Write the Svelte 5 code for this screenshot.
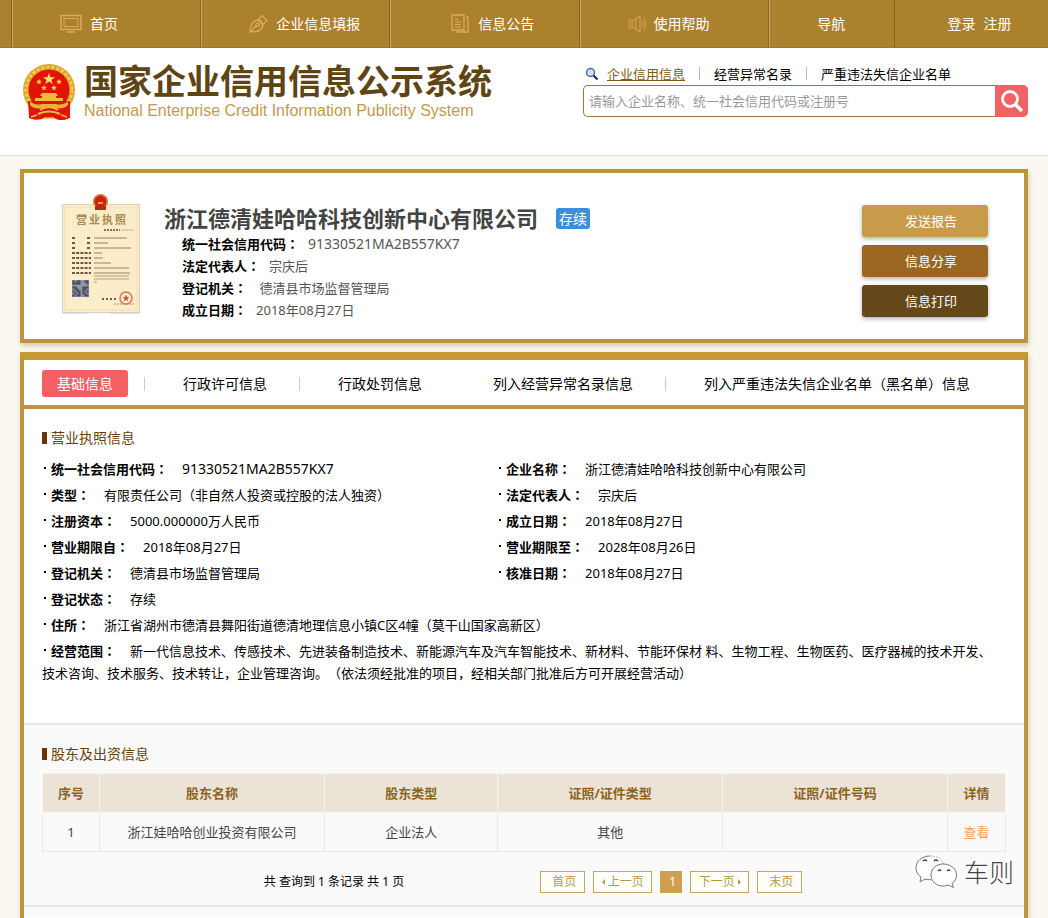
<script>
  const infoRows = [
    ['统一社会信用代码', '91330521MA2B557KX7', '企业名称', '浙江德清娃哈哈科技创新中心有限公司'],
    ['类型', '有限责任公司（非自然人投资或控股的法人独资）', '法定代表人', '宗庆后'],
    ['注册资本', '5000.000000万人民币', '成立日期', '2018年08月27日'],
    ['营业期限自', '2018年08月27日', '营业期限至', '2028年08月26日'],
    ['登记机关', '德清县市场监督管理局', '核准日期', '2018年08月27日']
  ];
  const summary = [
    ['统一社会信用代码', '91330521MA2B557KX7'],
    ['法定代表人', '宗庆后'],
    ['登记机关', '\u00a0德清县市场监督管理局'],
    ['成立日期', '2018年08月27日']
  ];
  const isCode = (value) => /^[0-9A-Z]+$/.test(value);
  const licenseLines = [0, 1, 2, 3, 4, 5, 6, 7];
  const qr = [];
  for (let y = 0; y < 8; y++) {
    for (let x = 0; x < 8; x++) {
      if ((x * 5 + y * 3 + x * y) % 7 < 4) qr.push([x, y]);
    }
  }
  let keyword = $state('');
</script>

{#snippet emblem()}
  <svg class="emblem" viewBox="0 0 54 57" aria-hidden="true">
    <path d="M7 36h40l-1 19c-6 2-11 1-14-1h-10c-4 2-9 2-14 0z" fill="#d3190b" />
    <circle cx="27" cy="26" r="26" fill="#dfa52b" />
    <circle cx="27" cy="26" r="23" fill="none" stroke="#f0cc5a" stroke-width="3" stroke-dasharray="3 2" />
    <circle cx="27" cy="26" r="20.5" fill="#e01507" />
    <path d="M27 9l1.500 4.200h4.500l-3.600 2.700 1.300 4.300-3.700-2.600-3.700 2.600 1.300-4.300-3.600-2.700h4.500z" fill="#ffe066" />
    <g fill="#ffd34f">
      <path d="M17 15l.8 1.800 2 .2-1.500 1.300.5 2-1.800-1-1.800 1 .5-2-1.500-1.300 2-.2z" />
      <path d="M37 15l.8 1.800 2 .2-1.500 1.300.5 2-1.800-1-1.800 1 .5-2-1.500-1.300 2-.2z" />
      <path d="M22 21l.8 1.800 2 .2-1.500 1.300.5 2-1.800-1-1.800 1 .5-2-1.500-1.300 2-.2z" />
      <path d="M32 21l.8 1.800 2 .2-1.500 1.300.5 2-1.800-1-1.800 1 .5-2-1.500-1.300 2-.2z" />
    </g>
    <path d="M20 29h14l2 3h-2v2h7v4H13v-4h7v-2h-2z" fill="#eebd3d" />
    <path d="M6 37h42v17c-6 2-11 2-15-1H21c-4 3-9 3-14 1z" fill="#dc170a" />
    <path d="M8 37c4 4 8 4 12 3h14c4 1 8 1 12-3v4c-4 4-8 4-12 3H20c-4 1-8 1-12-3z" fill="#e9b23a" />
    <path d="M18 46q9-6 18 0M16 50q11-5 22 0" stroke="#eebd3d" stroke-width="2" fill="none" />
    <path d="M9 53l6-2M45 53l-6-2M22 54h10" stroke="#eebd3d" stroke-width="1.500" fill="none" />
  </svg>
{/snippet}

{#snippet entry(name, value)}<dt>{name}<span class="colon">：</span></dt><dd class:code={isCode(value)}>{value}</dd>{/snippet}

<div class="page">
  <nav class="topnav" aria-label="主导航">
    <a href="#home">
      <svg width="22" height="20" viewBox="0 0 22 20" fill="none" stroke="#d9aa5c">
        <rect x="1" y="1.500" width="20" height="14" stroke-width="1.500" />
        <rect x="4" y="4.500" width="14" height="8" />
        <path d="M7 18h8" stroke-width="1.500" />
      </svg>
      首页
    </a>
    <a href="#report">
      <svg width="19" height="20" viewBox="0 0 19 20" fill="none" stroke="#d9aa5c" stroke-width="1.300">
        <path d="M1 18C1 12 3 7 9 6l5 5c-1 5-5 7-10 6.500z" />
        <path d="M1 18l6-6M10 5l3-3.500 5 5-3.500 3.500z" />
        <circle cx="8.500" cy="11" r="1.700" />
      </svg>
      企业信息填报
    </a>
    <a href="#notice" class="notice">
      <svg width="19" height="20" viewBox="0 0 19 20" fill="none" stroke="#d9aa5c">
        <path d="M1 1h12v15H1z" stroke-width="1.300" />
        <path d="M15 3h2v15H5" stroke-width="1.300" />
        <path d="M4 5.500h3M4 8h6M4 10.500h6M4 13h6" />
      </svg>
      信息公告
    </a>
    <a href="#help" class="help">
      <svg width="20" height="20" viewBox="0 0 20 20" fill="none" stroke="#cfa052" stroke-width="1.200">
        <path d="M1 6h3v8H1zM5 7l7-5v16l-7-5" />
        <path d="M8 6v8M14 7q2 3 0 6M15.500 4q4 6 0 12" />
      </svg>
      使用帮助
    </a>
    <a href="#guide" class="guide">导航</a>
    <div class="account"><a href="#login">登录</a><a href="#register">注册</a></div>
  </nav>

  <header class="header">
    <div class="brand">
      {@render emblem()}
      <div>
        <h1>国家企业信用信息公示系统</h1>
        <p>National Enterprise Credit Information Publicity System</p>
      </div>
    </div>
    <form class="search" onsubmit={(e) => e.preventDefault()}>
      <div class="scopes">
        <svg width="14" height="14" viewBox="0 0 14 14" fill="none">
          <circle cx="5.500" cy="5.500" r="4" fill="#cfe3f5" stroke="#4a6aa0" stroke-width="1.500" />
          <path d="M8.500 8.500l4 4" stroke="#1f2f5c" stroke-width="2.200" />
        </svg>
        <a href="#credit" class="current">企业信用信息</a>
        <a href="#abnormal">经营异常名录</a>
        <a href="#illegal">严重违法失信企业名单</a>
      </div>
      <div class="searchbox">
        <input type="text" aria-label="搜索" placeholder="请输入企业名称、统一社会信用代码或注册号" bind:value={keyword} />
        <button type="submit" aria-label="搜索">
          <svg width="24" height="24" viewBox="0 0 24 24" fill="none" stroke="#fff">
            <circle cx="10" cy="10" r="7.500" stroke-width="2.800" />
            <path d="M15.500 15.500l6.500 6.500" stroke-width="3.600" />
          </svg>
        </button>
      </div>
    </form>
  </header>

  <main>
    <section class="card company">
      <svg class="license" viewBox="0 0 78 120" aria-hidden="true">
        <rect x=".5" y="10.500" width="77" height="108" fill="#fbedc9" stroke="#d8d0bd" />
        <rect x="3" y="13" width="72" height="103" fill="none" stroke="#f3dfae" />
        <circle cx="38.500" cy="7.500" r="7.500" fill="#d3742f" />
        <circle cx="38.500" cy="7.500" r="5.800" fill="#cc2016" />
        <path d="M33 12h11v4H33z" fill="#b52a12" />
        <path d="M36 8h5v2h-5z" fill="#e8a03a" />
        <g font-size="11" font-weight="700" fill="#a98c58">
          <text x="14" y="30">营</text>
          <text x="27" y="30">业</text>
          <text x="40" y="30">执</text>
          <text x="53" y="30">照</text>
        </g>
        <path d="M42 36h16" stroke="#5e5240" stroke-width="1.500" stroke-dasharray="2 1" />
        <path d="M59 36h13" stroke="#c8b791" />
        {#each licenseLines as i}
          <path d="M10 {44 + i * 5}h19" stroke="#6a5b42" stroke-width="2.200" stroke-dasharray={i < 3 ? '3 12' : '3 1.200'} />
          <path d="M32 {44 + i * 5}h{[33, 14, 37, 8, 9, 17, 35, 36][i]}" stroke="#b8a67f" stroke-width="1.500" />
        {/each}
        <path d="M32 82h35M32 85h35M32 88h3" stroke="#cbb994" stroke-width="1.500" />
        <rect x="10" y="86" width="17" height="17" fill="#8f96a2" />
        {#each qr as [x, y]}
          <rect x={10.5 + x * 2} y={86.5 + y * 2} width="2" height="2" fill="#3f4654" />
        {/each}
        <path d="M40 105h15" stroke="#6a5b42" stroke-width="2" stroke-dasharray="2 2" />
        <circle cx="64" cy="104" r="6" fill="none" stroke="#e2705f" stroke-width="1.500" />
        <path d="M64 100.500l1 2.500h2.500l-2 1.600.8 2.600-2.300-1.500-2.300 1.500.8-2.600-2-1.600h2.500z" fill="#dc4a3b" />
        <path d="M52 110h20" stroke="#b8805a" stroke-dasharray="2 1" />
        <path d="M1 119h24M47 119h30" stroke="#c9ccd2" />
      </svg>
      <div class="company-info">
        <div class="company-title">
          <h2>浙江德清娃哈哈科技创新中心有限公司</h2>
          <span class="badge">存续</span>
        </div>
        <dl class="summary">
          {#each summary as [name, value]}
            <div>{@render entry(name, value)}</div>
          {/each}
        </dl>
      </div>
      <div class="actions">
        <button type="button" class="send">发送报告</button>
        <button type="button" class="share">信息分享</button>
        <button type="button" class="print">信息打印</button>
      </div>
    </section>

    <section class="card details">
      <nav class="tabs" aria-label="信息分类">
        <a href="#basic" class="active">基础信息</a>
        <a href="#licence">行政许可信息</a>
        <a href="#penalty">行政处罚信息</a>
        <a href="#abnormal-list" class="plain">列入经营异常名录信息</a>
        <a href="#blacklist">列入严重违法失信企业名单（黑名单）信息</a>
      </nav>

      <div class="block">
        <h3>营业执照信息</h3>
        <dl class="info">
          {#each infoRows as [l1, v1, l2, v2]}
            <div>{@render entry(l1, v1)}</div>
            <div>{@render entry(l2, v2)}</div>
          {/each}
          <div class="wide">{@render entry('登记状态', '存续')}</div>
          <div class="wide">{@render entry('住所', '浙江省湖州市德清县舞阳街道德清地理信息小镇C区4幢（莫干山国家高新区）')}</div>
          <div class="wide scope">{@render entry('经营范围', '新一代信息技术、传感技术、先进装备制造技术、新能源汽车及汽车智能技术、新材料、节能环保材 料、生物工程、生物医药、医疗器械的技术开发、技术咨询、技术服务、技术转让，企业管理咨询。（依法须经批准的项目，经相关部门批准后方可开展经营活动）')}</div>
        </dl>
      </div>

      <div class="block holders">
        <h3>股东及出资信息</h3>
        <table>
          <colgroup>
            <col style="width:5.9%" /><col style="width:23.4%" /><col style="width:18%" />
            <col style="width:23.3%" /><col style="width:23.4%" /><col style="width:6%" />
          </colgroup>
          <thead>
            <tr><th>序号</th><th>股东名称</th><th>股东类型</th><th>证照/证件类型</th><th>证照/证件号码</th><th>详情</th></tr>
          </thead>
          <tbody>
            <tr><td>1</td><td>浙江娃哈哈创业投资有限公司</td><td>企业法人</td><td>其他</td><td></td><td><a href="#view">查看</a></td></tr>
          </tbody>
        </table>
        <div class="pager">
          <span>共 查询到 1 条记录 共 1 页</span>
          <div class="pages">
            <button type="button">首页</button>
            <button type="button" class="step"><i class="prev"></i>上一页</button>
            <button type="button" class="on">1</button>
            <button type="button" class="step">下一页<i class="next"></i></button>
            <button type="button">末页</button>
          </div>
        </div>
        <div class="watermark">
          <svg width="42" height="34" viewBox="0 0 42 34" fill="#fff" stroke="#777" stroke-width="1">
            <path d="M15 1C7 1 1 6 1 13c0 4 2 7 5 9l-1 5 5-3c2 .6 4 .8 6 .7" />
            <path d="M15 1c7 0 12 3 13.500 8" fill="none" stroke="#bbb" stroke-dasharray="2 1" />
            <path d="M28 9c-7 0-12 5-12 11s5 11 12 11c2 0 4-.3 5.500-1l5 2.500-1.500-4c3-2 4.500-5 4.500-8.500C41.500 14 36 9 28 9z" />
            <path d="M8 6q2-2 4 0M19 6q2-2 4 0M23 16q2-2 3 0M32 16q2-2 3 0" fill="none" stroke="#444" stroke-width="1.400" />
          </svg>
          <span>车则</span>
        </div>
      </div>
      <div class="block next-block"></div>
    </section>
  </main>
</div>

<style>
  :global(body) {
    background: #faf8f0;
  }
  .page {
    display: flex;
    flex-direction: column;
    min-height: 100vh;
    box-sizing: border-box;
    font-family: "Noto Sans", "Noto Sans CJK SC", sans-serif;
    text-spacing-trim: space-all;
    font-size: 13px;
    line-height: 22px;
    color: #000;
  }
  .page *,
  .page *::before,
  .page *::after {
    box-sizing: border-box;
  }
  a {
    color: inherit;
    text-decoration: none;
  }
  h1, h2, h3, p, dl, dd {
    margin: 0;
  }
  button, input {
    font: inherit;
    border: 0;
    padding: 0;
  }
  button {
    cursor: pointer;
  }

  .topnav {
    display: grid;
    grid-template-columns: 189fr 189fr 189fr 189fr 126fr 154fr;
    height: 48px;
    padding-left: 11px;
    background: #ac812e;
    border-bottom: 1px solid #a17429;
    color: #fff;
    font-size: 14px;
  }
  .topnav > * {
    display: flex;
    align-items: center;
    gap: 8px;
    padding-left: 48px;
    border-left: 1px solid #8a6420;
    box-shadow: inset 1px 0 #d2a75a;
  }
  .topnav > .notice {
    padding-left: 61px;
  }
  .topnav > .help {
    gap: 6px;
  }
  .topnav > .guide {
    justify-content: center;
    padding-left: 0;
  }
  .topnav > .account {
    justify-content: center;
    padding-left: 16px;
    box-shadow: none;
  }

  .header {
    display: flex;
    justify-content: space-between;
    gap: 24px;
    padding: 16px 20px 32px 22px;
    background: #fff;
    border-bottom: 1px solid #ddd;
  }
  .brand {
    display: flex;
    gap: 8px;
  }
  .emblem {
    width: 54px;
    height: 57px;
  }
  .brand h1 {
    color: #5f4513;
    font-size: 34px;
    line-height: 35px;
    font-weight: 700;
    white-space: nowrap;
  }
  .brand p {
    color: #c39a4c;
    font: 16px/24px "Liberation Sans", Arial, sans-serif;
    white-space: nowrap;
  }
  .search {
    flex: 0 1 445px;
  }
  .scopes {
    display: flex;
    align-items: center;
    height: 19px;
    margin-bottom: 2px;
    padding-left: 2px;
    white-space: nowrap;
  }
  .scopes svg {
    margin-right: 8px;
  }
  .scopes a + a {
    display: flex;
    align-items: center;
  }
  .scopes a + a::before {
    content: "";
    width: 1px;
    height: 13px;
    margin: 0 14px;
    background: #bbb;
  }
  .scopes .current {
    color: #805a17;
    text-decoration: underline;
  }
  .searchbox {
    display: flex;
    height: 32px;
  }
  .searchbox input {
    flex: 1;
    min-width: 0;
    padding: 0 5px;
    border: 1px solid #94783c;
    border-right: 0;
    border-radius: 5px 0 0 5px;
    background: #fff;
  }
  .searchbox input::placeholder {
    color: #999;
  }
  .searchbox button {
    display: flex;
    align-items: center;
    justify-content: center;
    width: 33px;
    background: #f06265;
    border-radius: 0 5px 5px 0;
  }

  main {
    flex: 1;
    display: flex;
    flex-direction: column;
    gap: 9px;
    padding: 13px 20px 0;
  }
  .card {
    background: #fff;
    border: 4px solid #bd953e;
    box-shadow: 1px 3px 5px rgba(120, 100, 60, 0.3);
  }
  .company {
    display: flex;
    padding: 21px 36px 18px 38px;
  }
  .license {
    width: 78px;
    height: 120px;
  }
  .company-info {
    flex: 1;
    padding: 9px 0 0 24px;
  }
  .company-title {
    display: flex;
    align-items: center;
    gap: 18px;
    height: 30px;
  }
  h2 {
    color: #444;
    font-size: 22px;
    line-height: 30px;
  }
  .badge {
    padding: 0 3px;
    border-radius: 3px;
    background: #3c8fdc;
    color: #fff;
    font-size: 14px;
    line-height: 21px;
  }
  dt, dd {
    display: inline;
  }
  dt {
    font-weight: 700;
  }
  .code {
    font-size: 14px;
    line-height: 20px;
  }
  .colon {
    font-family: "Noto Sans CJK TC", sans-serif;
  }
  .summary {
    padding-left: 18px;
  }
  .summary dd {
    margin-left: 9px;
    color: #555;
  }
  .actions {
    display: flex;
    flex-direction: column;
    gap: 8px;
    width: 126px;
    padding-top: 11px;
  }
  .actions button {
    height: 32px;
    padding-left: 12px;
    border-radius: 3px;
    color: #fff;
    box-shadow: 0 2px 4px rgba(0, 0, 0, 0.3);
  }
  .send {
    background: #c89b4a;
  }
  .share {
    background: #9b6622;
  }
  .print {
    background: #644819;
  }

  .details {
    position: relative;
    flex: 1;
    border-top: 8px solid #c59a35;
    border-bottom: 0;
  }
  .tabs {
    display: flex;
    align-items: center;
    height: 49px;
    padding: 2px 18px 0;
    border-bottom: 4px solid #bd953e;
    font-size: 14px;
    white-space: nowrap;
  }
  .tabs .active {
    margin-right: 16px;
    padding: 0 15px;
    border-radius: 3px;
    background: #f45f63;
    color: #fff;
    line-height: 27px;
  }
  .tabs a + a {
    display: flex;
    align-items: center;
    margin-right: 32px;
  }
  .tabs a + a:last-child {
    margin-right: 0;
  }
  .tabs a + a::before {
    content: "";
    width: 1px;
    height: 14px;
    margin-right: 38px;
    background: #ccc;
  }
  .tabs a.plain::before {
    background: none;
  }

  .block {
    padding: 18px 18px 39px;
    border-bottom: 2px solid #e8e8e8;
  }
  h3 {
    display: flex;
    align-items: center;
    gap: 4px;
    margin-bottom: 7px;
    color: #6b3f0c;
    font-size: 14px;
    font-weight: 400;
  }
  h3::before {
    content: "";
    width: 5px;
    height: 12px;
    background: #6b3408;
  }
  .info {
    display: grid;
    grid-template-columns: 455fr 509fr;
    line-height: 26px;
  }
  .info .wide {
    grid-column: 1 / -1;
  }
  .info .scope {
    margin-top: 2px;
    padding-right: 8px;
    line-height: 22px;
  }
  .info dt::before {
    content: "";
    display: inline-block;
    width: 2px;
    height: 2px;
    margin: 0 5px 5px 2px;
    background: #000;
  }
  .info dd {
    margin-left: 14px;
  }

  .holders {
    position: relative;
    padding-bottom: 12px;
    background: #fafafa;
  }
  .holders h3 {
    margin-bottom: 8px;
  }
  table {
    width: 100%;
    border-collapse: collapse;
    table-layout: fixed;
    text-align: center;
  }
  th {
    height: 39px;
    padding: 0;
    border: 1px solid #f8f4ec;
    background: #eae3d6;
    color: #8c6420;
  }
  td {
    height: 39px;
    padding: 0;
    border: 1px solid #e9e9e9;
    color: #444;
  }
  td a {
    color: #f0a45d;
  }
  .pager {
    display: flex;
    align-items: center;
    justify-content: center;
    gap: 136px;
    padding: 19px 0 0 18px;
    font-size: 12px;
  }
  .pages {
    display: flex;
    gap: 8px;
  }
  .pages button {
    display: flex;
    align-items: center;
    justify-content: center;
    gap: 3px;
    width: 45px;
    height: 22px;
    border: 1px solid #c2a75e;
    background: #fffffa;
    color: #b5994e;
    padding-left: 3px;
  }
  .pages .step {
    width: 59px;
    padding-left: 0;
  }
  .pages .on {
    width: 22px;
    border-color: #cfa050;
    background: #cfa050;
    color: #fff;
  }
  .pages i {
    border: 3px solid transparent;
  }
  .pages .prev {
    border-left: 0;
    border-right-color: #b5994e;
  }
  .pages .next {
    border-right: 0;
    border-left-color: #b5994e;
  }
  .watermark {
    position: absolute;
    right: 10px;
    bottom: 12px;
    display: flex;
    align-items: center;
    gap: 7px;
    color: #444;
    font-size: 25px;
    font-weight: 300;
    line-height: 42px;
    text-shadow: -1px -1px #fff;
  }
  .next-block {
    padding: 0;
    border: 0;
    background: #fafafa;
    height: 10px;
  }
</style>
